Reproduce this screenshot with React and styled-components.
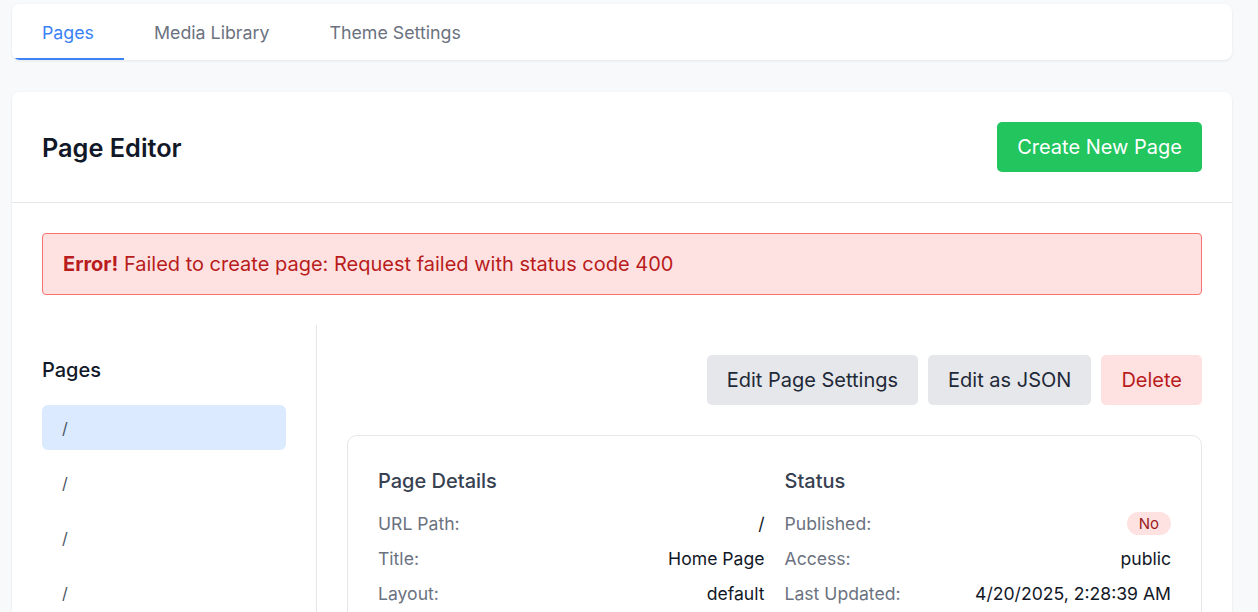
import React from 'react';
import styled, { createGlobalStyle } from 'styled-components';

const GlobalStyle = createGlobalStyle`
  * { box-sizing: border-box; }
  body {
    margin: 0;
    background-color: #f8f9fb;
    font-family: Inter, "Noto Sans", sans-serif;
    color: #111827;
  }
`;

const Page = styled.div`
  padding: 4px 26px 0 12px;
  display: flex;
  flex-direction: column;
  gap: 32px;
`;

const TabBar = styled.nav`
  display: flex;
  height: 56px;
  background-color: #ffffff;
  border-radius: 8px;
  box-shadow: 0 1px 3px rgba(0, 0, 0, 0.08);
  overflow: hidden;
`;

const Tab = styled.button`
  border: none;
  background: none;
  padding: 0 30px;
  font-family: inherit;
  font-size: 17.8px;
  color: ${(p) => (p.$active ? '#3b82f6' : '#6b7280')};
  border-bottom: 2px solid ${(p) => (p.$active ? '#3b82f6' : 'transparent')};
  border-top: 2px solid transparent;
  cursor: pointer;
`;

const Card = styled.section`
  background-color: #ffffff;
  border-radius: 8px;
  box-shadow: 0 1px 3px rgba(0, 0, 0, 0.08);
  min-height: 560px;
`;

const Header = styled.header`
  display: flex;
  align-items: center;
  justify-content: space-between;
  padding: 30px;
  border-bottom: 1px solid #e5e7eb;
`;

const Title = styled.h1`
  margin: 0;
  font-size: 25.3px;
  font-weight: 600;
  color: #111827;
`;

const Button = styled.button`
  height: 50px;
  padding: 0 20px;
  border: none;
  border-radius: 5px;
  font-family: inherit;
  font-size: 20px;
  cursor: pointer;
  background-color: ${(p) =>
    p.$variant === 'success' ? '#22c55e' : p.$variant === 'danger' ? '#fee2e2' : '#e5e7eb'};
  color: ${(p) =>
    p.$variant === 'success' ? '#ffffff' : p.$variant === 'danger' ? '#b91c1c' : '#1f2937'};
`;

const Body = styled.div`
  padding: 30px 30px 0;
  display: flex;
  flex-direction: column;
  gap: 30px;
`;

const Alert = styled.div`
  padding: 15px 20px;
  background-color: #fee2e2;
  border: 1px solid #f87171;
  border-radius: 4px;
  color: #b91c1c;
  font-size: 20px;
  line-height: 30px;

  strong {
    font-weight: 700;
  }
`;

const Columns = styled.div`
  display: flex;
`;

const Sidebar = styled.aside`
  width: 275px;
  flex-shrink: 0;
  padding: 30px 30px 0 0;
  border-right: 1px solid #e5e7eb;
  min-height: 300px;
`;

const SideTitle = styled.h2`
  margin: 0 0 20px;
  font-size: 20px;
  font-weight: 500;
  line-height: 30px;
  color: #111827;
`;

const PageList = styled.ul`
  list-style: none;
  margin: 0;
  padding: 0;
  display: flex;
  flex-direction: column;
  gap: 10px;
`;

const PageItem = styled.li`
  height: 45px;
  display: flex;
  align-items: center;
  padding: 0 20px;
  border-radius: 6px;
  font-size: 16px;
  color: #4b5563;
  background-color: ${(p) => (p.$active ? '#dbeafe' : 'transparent')};
`;

const Main = styled.div`
  flex: 1;
  padding: 30px 0 0 30px;
  display: flex;
  flex-direction: column;
  gap: 30px;
`;

const Actions = styled.div`
  display: flex;
  justify-content: flex-end;
  gap: 10px;
`;

const DetailCard = styled.div`
  border: 1px solid #e5e7eb;
  border-radius: 10px;
  padding: 30px;
  display: grid;
  grid-template-columns: 1fr 1fr;
  gap: 20px;
`;

const SectionTitle = styled.h3`
  margin: 0 0 10px;
  font-size: 20px;
  font-weight: 500;
  line-height: 30px;
  color: #374151;
`;

const Row = styled.div`
  display: flex;
  justify-content: space-between;
  align-items: center;
  height: 35px;
  font-size: 17.6px;
`;

const Label = styled.span`
  color: #6b7280;
`;

const Value = styled.span`
  color: #111827;
`;

const Badge = styled.span`
  padding: 2px 12px;
  border-radius: 999px;
  background-color: #fee2e2;
  color: #991b1b;
  font-size: 15px;
  line-height: 19px;
`;

const tabs = ['Pages', 'Media Library', 'Theme Settings'];

const App = () => {
  return (
    <>
      <GlobalStyle />
      <Page>
        <TabBar>
          {tabs.map((t, i) => (
            <Tab key={t} $active={i === 0}>
              {t}
            </Tab>
          ))}
        </TabBar>
        <Card>
          <Header>
            <Title>Page Editor</Title>
            <Button $variant="success">Create New Page</Button>
          </Header>
          <Body>
            <Alert>
              <strong>Error!</strong> Failed to create page: Request failed with status code 400
            </Alert>
            <Columns>
              <Sidebar>
                <SideTitle>Pages</SideTitle>
                <PageList>
                  <PageItem $active>/</PageItem>
                  <PageItem>/</PageItem>
                  <PageItem>/</PageItem>
                  <PageItem>/</PageItem>
                </PageList>
              </Sidebar>
              <Main>
                <Actions>
                  <Button>Edit Page Settings</Button>
                  <Button>Edit as JSON</Button>
                  <Button $variant="danger">Delete</Button>
                </Actions>
                <DetailCard>
                  <div>
                    <SectionTitle>Page Details</SectionTitle>
                    <Row><Label>URL Path:</Label><Value>/</Value></Row>
                    <Row><Label>Title:</Label><Value>Home Page</Value></Row>
                    <Row><Label>Layout:</Label><Value>default</Value></Row>
                  </div>
                  <div>
                    <SectionTitle>Status</SectionTitle>
                    <Row><Label>Published:</Label><Badge>No</Badge></Row>
                    <Row><Label>Access:</Label><Value>public</Value></Row>
                    <Row><Label>Last Updated:</Label><Value>4/20/2025, 2:28:39 AM</Value></Row>
                  </div>
                </DetailCard>
              </Main>
            </Columns>
          </Body>
        </Card>
      </Page>
    </>
  );
};

export default App;
